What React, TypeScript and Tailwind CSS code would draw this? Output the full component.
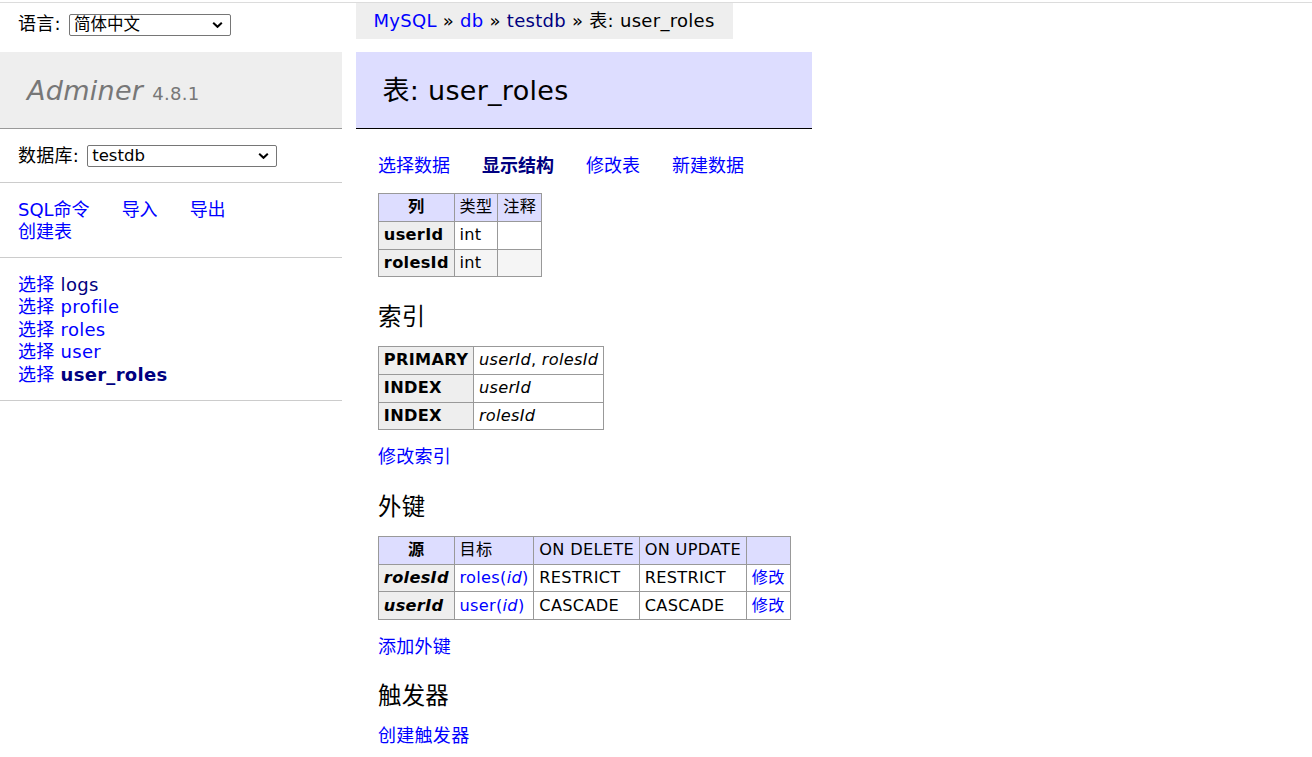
const visitedCls = "text-[#000080]";
const linkCls = "text-[#0000ff]";

function Chevron() {
  return (
    <svg width="11" height="7" viewBox="0 0 11 7" className="absolute right-[7px] top-1/2 -translate-y-1/2">
      <path d="M1.2 1.2 L5.5 5.3 L9.8 1.2" fill="none" stroke="#000" strokeWidth="2" />
    </svg>
  );
}

function FakeSelect({ value, width }: { value: string; width: string }) {
  return (
    <span className={`relative inline-block ${width} h-[22px] border border-[#767676] rounded-[2px] bg-white align-middle`}>
      <span className="absolute left-[4px] top-0 leading-[20px] text-[16.5px] tracking-normal text-black">{value}</span>
      <Chevron />
    </span>
  );
}

function Cell({ children, className = "" }: { children?: React.ReactNode; className?: string }) {
  return <td className={`border border-[#999] px-[4.86px] py-[3.24px] ${className}`}>{children}</td>;
}

function Head({ children, className = "" }: { children?: React.ReactNode; className?: string }) {
  return <th className={`border border-[#999] px-[4.86px] py-[3.24px] font-bold ${className}`}>{children}</th>;
}

function H3({ children }: { children: React.ReactNode }) {
  return <h3 className="mt-[23.4px] pt-[2px] -mb-[2px] text-[23.4px] leading-[1.25]">{children}</h3>;
}

export default function App() {
  const tables = [
    { name: "logs", visited: true },
    { name: "profile" },
    { name: "roles" },
    { name: "user" },
    { name: "user_roles", active: true },
  ];

  return (
    <div
      className="min-h-screen bg-white text-black text-[18px] leading-[1.25] tracking-[0.016em]"
      style={{ fontFamily: '"DejaVu Sans", "Noto Sans CJK SC", sans-serif' }}
    >
      <div className="h-[2px]" />
      <div className="h-px bg-[#dcdcdc]" />
      <div className="flex">
        {/* menu column */}
        <div className="w-[342px] shrink-0">
          <div className="h-[36px] px-[18px] pt-[5.4px]">
            <div className="flex items-center h-[32.4px]">
              <span className="mr-[8px]">语言:</span>
              <FakeSelect value="简体中文" width="w-[162px]" />
            </div>
          </div>
          <div className="mt-[12.5px]">
            <h1 className="bg-[#eee] border-b border-[#999] px-[27px] pt-[22.6px] pb-[20.6px] text-[27px] leading-[1.25] text-[#777]">
              <span className="italic">Adminer</span> <span className="text-[18px]">4.8.1</span>
            </h1>
            <div className="px-[18px] py-[14.4px] border-b border-[#ccc] flex items-center h-[54px]">
              <span className="mr-[8px]">数据库:</span>
              <FakeSelect value="testdb" width="w-[190px]" />
            </div>
            <div className="px-[18px] pt-[15.4px] pb-[13.4px] border-b border-[#ccc] tracking-normal">
              <div className="flex">
                <a className={`${linkCls} mr-[32px]`}>SQL命令</a>
                <a className={`${linkCls} mr-[32px]`}>导入</a>
                <a className={linkCls}>导出</a>
              </div>
              <div>
                <a className={linkCls}>创建表</a>
              </div>
            </div>
            <ul className="px-[18px] pt-[15.4px] pb-[13.4px] border-b border-[#ccc]">
              {tables.map((t) => (
                <li key={t.name} className="whitespace-nowrap">
                  <a className={linkCls}>选择</a>{" "}
                  <a className={`${t.visited || t.active ? visitedCls : linkCls} ${t.active ? "font-bold" : ""}`}>{t.name}</a>
                </li>
              ))}
            </ul>
          </div>
        </div>

        {/* content column */}
        <div className="ml-[13.5px]">
          <div className="w-fit h-[36px] bg-[#eee] px-[18px] pt-[1.5px] leading-[32.4px] whitespace-nowrap">
            <a className={linkCls}>MySQL</a> » <a className={linkCls}>db</a> » <a className={visitedCls}>testdb</a> » 表: user_roles
          </div>
          <div className="mt-[12.5px] w-[456px]">
            <h2 className="bg-[#ddf] border-b border-black px-[27px] pt-[22.6px] pb-[20.6px] text-[27px] leading-[1.25]">表: user_roles</h2>
            <div className="pl-[22.5px] pt-[25px] pb-[20px]">
              <div className="flex tracking-normal pt-px -mb-px">
                <a className={`${linkCls} mr-[32px]`}>选择数据</a>
                <a className={`${visitedCls} font-bold mr-[32px]`}>显示结构</a>
                <a className={`${linkCls} mr-[32px]`}>修改表</a>
                <a className={linkCls}>新建数据</a>
              </div>

              <table className="mt-[16.2px] border-collapse text-[16.2px] leading-[1.25]">
                <thead>
                  <tr className="bg-[#ddf]">
                    <Head className="text-center px-[8.1px]">列</Head>
                    <Cell>类型</Cell>
                    <Cell>注释</Cell>
                  </tr>
                </thead>
                <tbody>
                  <tr>
                    <Head className="bg-[#eee] text-left">userId</Head>
                    <Cell>int</Cell>
                    <Cell></Cell>
                  </tr>
                  <tr className="bg-[#f5f5f5]">
                    <Head className="bg-[#eee] text-left">rolesId</Head>
                    <Cell>int</Cell>
                    <Cell></Cell>
                  </tr>
                </tbody>
              </table>

              <H3>索引</H3>
              <table className="mt-[16.2px] border-collapse text-[16.2px] leading-[1.25]">
                <tbody>
                  <tr>
                    <Head className="bg-[#eee] text-left">PRIMARY</Head>
                    <Cell><i>userId</i>, <i>rolesId</i></Cell>
                  </tr>
                  <tr>
                    <Head className="bg-[#eee] text-left">INDEX</Head>
                    <Cell><i>userId</i></Cell>
                  </tr>
                  <tr>
                    <Head className="bg-[#eee] text-left">INDEX</Head>
                    <Cell><i>rolesId</i></Cell>
                  </tr>
                </tbody>
              </table>
              <p className="mt-[14.4px] pt-px -mb-px">
                <a className={linkCls}>修改索引</a>
              </p>

              <H3>外键</H3>
              <table className="mt-[16.2px] border-collapse text-[16.2px] leading-[1.25]">
                <thead>
                  <tr className="bg-[#ddf]">
                    <Head className="text-center px-[8.1px]">源</Head>
                    <Cell>目标</Cell>
                    <Cell>ON DELETE</Cell>
                    <Cell>ON UPDATE</Cell>
                    <Cell></Cell>
                  </tr>
                </thead>
                <tbody>
                  <tr>
                    <Head className="bg-[#eee] text-left"><i>rolesId</i></Head>
                    <Cell><a className={linkCls}>roles(<i>id</i>)</a></Cell>
                    <Cell>RESTRICT</Cell>
                    <Cell>RESTRICT</Cell>
                    <Cell><a className={linkCls}>修改</a></Cell>
                  </tr>
                  <tr>
                    <Head className="bg-[#eee] text-left"><i>userId</i></Head>
                    <Cell><a className={linkCls}>user(<i>id</i>)</a></Cell>
                    <Cell>CASCADE</Cell>
                    <Cell>CASCADE</Cell>
                    <Cell><a className={linkCls}>修改</a></Cell>
                  </tr>
                </tbody>
              </table>
              <p className="mt-[14.4px] pt-px -mb-px">
                <a className={linkCls}>添加外键</a>
              </p>

              <H3>触发器</H3>
              <p className="mt-[14.4px] pt-px -mb-px">
                <a className={linkCls}>创建触发器</a>
              </p>
            </div>
          </div>
        </div>
      </div>
    </div>
  );
}
